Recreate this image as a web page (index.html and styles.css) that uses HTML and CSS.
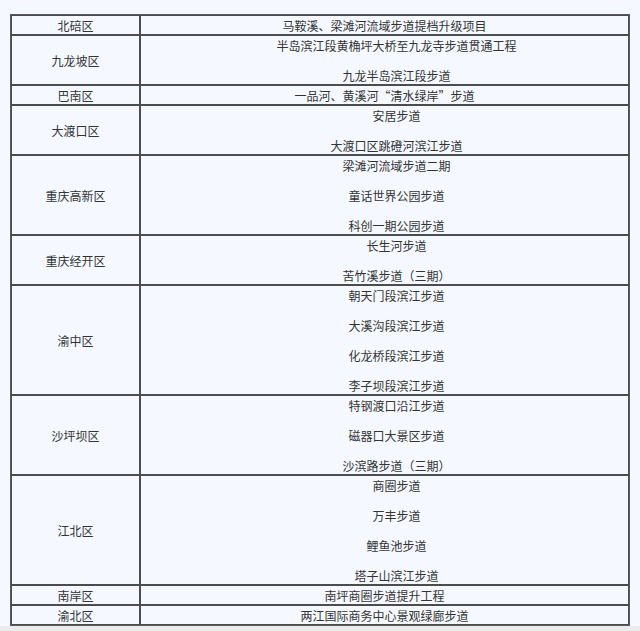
FILE: index.html
```html
<!DOCTYPE html>
<html lang="zh">
<head>
<meta charset="utf-8">
<link rel="stylesheet" href="styles.css">
</head>
<body>
<div class="page">
<table class="tbl">
<tbody>
<tr><td class="d">北碚区</td><td class="p">马鞍溪、梁滩河流域步道提档升级项目</td></tr>
<tr><td class="d">九龙坡区</td><td class="p multi"><p>半岛滨江段黄桷坪大桥至九龙寺步道贯通工程</p><p>九龙半岛滨江段步道</p></td></tr>
<tr><td class="d">巴南区</td><td class="p">一品河、黄溪河“清水绿岸”步道</td></tr>
<tr><td class="d">大渡口区</td><td class="p multi"><p>安居步道</p><p>大渡口区跳磴河滨江步道</p></td></tr>
<tr><td class="d">重庆高新区</td><td class="p multi"><p>梁滩河流域步道二期</p><p>童话世界公园步道</p><p>科创一期公园步道</p></td></tr>
<tr><td class="d">重庆经开区</td><td class="p multi"><p>长生河步道</p><p>苦竹溪步道（三期）</p></td></tr>
<tr><td class="d">渝中区</td><td class="p multi"><p>朝天门段滨江步道</p><p>大溪沟段滨江步道</p><p>化龙桥段滨江步道</p><p>李子坝段滨江步道</p></td></tr>
<tr><td class="d">沙坪坝区</td><td class="p multi"><p>特钢渡口沿江步道</p><p>磁器口大景区步道</p><p>沙滨路步道（三期）</p></td></tr>
<tr><td class="d">江北区</td><td class="p multi"><p>商圈步道</p><p>万丰步道</p><p>鲤鱼池步道</p><p>塔子山滨江步道</p></td></tr>
<tr><td class="d">南岸区</td><td class="p">南坪商圈步道提升工程</td></tr>
<tr><td class="d">渝北区</td><td class="p">两江国际商务中心景观绿廊步道</td></tr>
</tbody>
</table>
</div>
<div class="strip"></div>
</body>
</html>
```
FILE: styles.css
```css
html, body {
  margin: 0;
  padding: 0;
}
body {
  background: #ebebeb;
  font-family: "Noto Sans CJK SC", "Noto Sans", sans-serif;
  font-size: 12px;
  color: #333;
}
.page {
  background: #f5f9ff;
  padding: 14px 10px 0 10px;
  height: 612px;
}
.tbl {
  width: 620px;
  table-layout: fixed;
  border-collapse: separate;
  border-spacing: 0;
  border: 1px solid #5a5a5a;
}
.tbl td {
  border: 1px solid #4c4c4c;
  padding: 2px 1px 1px 1px;
  line-height: 15px;
  text-align: center;
  vertical-align: middle;
  box-sizing: border-box;
}
.tbl td.d {
  width: 129px;
}
.multi p {
  margin: 0;
  text-indent: 2em;
}
.multi p + p {
  margin-top: 15px;
}
.strip {
  height: 19px;
  background: #ebebeb;
}
```
